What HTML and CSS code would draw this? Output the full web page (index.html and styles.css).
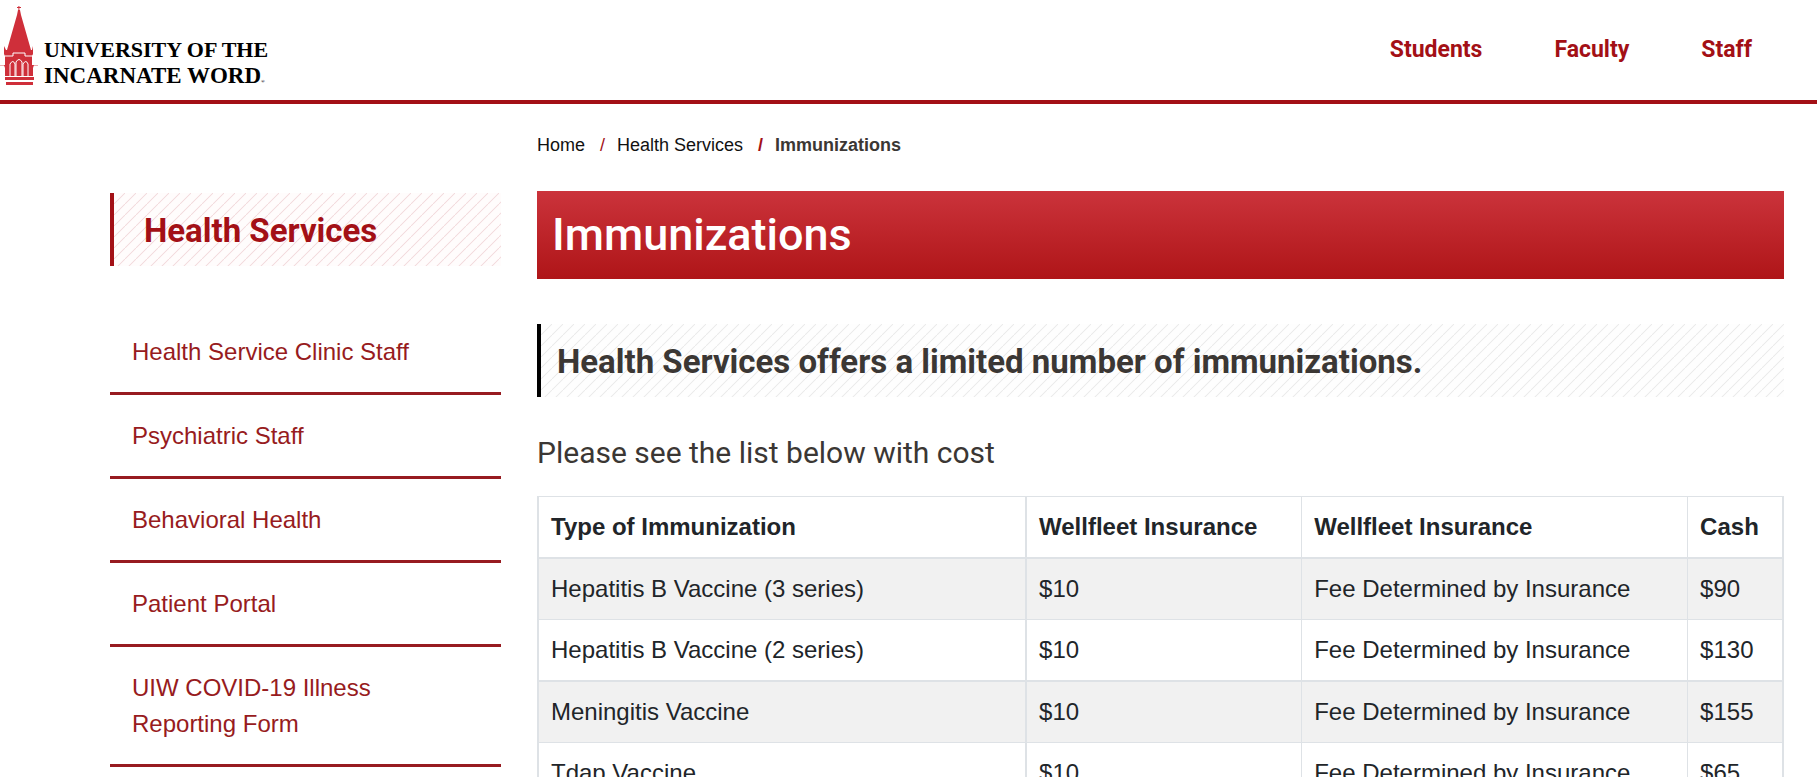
FILE: index.html
```html
<!DOCTYPE html>
<html lang="en">
<head>
  <meta charset="UTF-8">
  <title>Immunizations</title>
  <link rel="stylesheet" href="styles.css">
</head>
<body>
  <header class="header">
    <a class="logo" href="#">
      <svg class="logo-tower" width="38" height="88" viewBox="0 0 38 88" aria-hidden="true">
        <g fill="#cf2f3a">
          <path d="M18.400 6h1v4h-1zM17 7h4v1h-4zM18 10h2l1 5 10 35h1l1-4v8l-1 2v9h2l-1 3v8H5v-8l-1-3h1V56l-1-2v-8l2 4h1L17 15z"/>
          <path d="M5 77h29v3H5zM6 82h27v3H6z"/>
          <path d="M0 65h5v1H0zM33 65h5v1h-5z" opacity=".4"/>
        </g>
        <g fill="none" stroke="#fff">
          <path d="M5 56h8v-3h12v3h8"/>
          <path d="M10 76V64q3-5 5 0v12M16 76V62q3-5 6 0v14M23 76V64q3-5 5 0v12"/>
          <path d="M5 76.500h29M5 81h29"/>
        </g>
      </svg>
      <span class="logo-name">
        <span class="logo-top">UNIVERSITY OF THE</span>
        <span class="logo-bottom">INCARNATE WORD<small class="logo-mark">®</small></span>
      </span>
    </a>
    <nav class="top-nav">
      <a href="#">Students</a>
      <a href="#">Faculty</a>
      <a href="#">Staff</a>
    </nav>
  </header>

  <div class="page">
    <aside class="sidebar">
      <h2 class="sidebar-title">Health Services</h2>
      <ul class="side-nav">
        <li><a href="#">Health Service Clinic Staff</a></li>
        <li><a href="#">Psychiatric Staff</a></li>
        <li><a href="#">Behavioral Health</a></li>
        <li><a href="#">Patient Portal</a></li>
        <li><a href="#">UIW COVID-19 Illness Reporting Form</a></li>
      </ul>
    </aside>

    <main>
      <ol class="breadcrumb">
        <li><a href="#">Home</a></li>
        <li><a href="#">Health Services</a></li>
        <li class="current">Immunizations</li>
      </ol>
      <h1 class="banner">Immunizations</h1>
      <h2 class="notice">Health Services offers a limited number of immunizations.</h2>
      <h3 class="subhead">Please see the list below with cost</h3>
      <table class="prices">
        <thead>
          <tr>
            <th class="col-type">Type of Immunization</th>
            <th class="col-plan">Wellfleet Insurance</th>
            <th class="col-fee">Wellfleet Insurance</th>
            <th>Cash</th>
          </tr>
        </thead>
        <tbody>
          <tr>
            <td>Hepatitis B Vaccine (3 series)</td>
            <td>$10</td>
            <td>Fee Determined by Insurance</td>
            <td>$90</td>
          </tr>
          <tr>
            <td>Hepatitis B Vaccine (2 series)</td>
            <td>$10</td>
            <td>Fee Determined by Insurance</td>
            <td>$130</td>
          </tr>
          <tr>
            <td>Meningitis Vaccine</td>
            <td>$10</td>
            <td>Fee Determined by Insurance</td>
            <td>$155</td>
          </tr>
          <tr>
            <td>Tdap Vaccine</td>
            <td>$10</td>
            <td>Fee Determined by Insurance</td>
            <td>$65</td>
          </tr>
        </tbody>
      </table>
    </main>
  </div>
</body>
</html>
```
FILE: styles.css
```css
* {
  box-sizing: border-box;
}
html {
  height: 100%;
  overflow: hidden;
}
body {
  margin: 0;
  background: #fff;
  color: #212529;
  font-family: "Liberation Sans", Arial, sans-serif;
  font-size: 24px;
  line-height: 36px;
}
a {
  color: inherit;
  text-decoration: none;
}
li a:hover,
.top-nav a:hover {
  text-decoration: underline;
}
h1,
h2,
h3,
ul,
ol {
  margin: 0;
  padding: 0;
}
ul,
ol {
  list-style: none;
}
h1,
h2,
h3,
.top-nav {
  font-family: Roboto, sans-serif;
}

.header {
  display: flex;
  justify-content: space-between;
  align-items: flex-start;
  height: 104px;
  border-bottom: 4px solid #a31016;
}
.logo {
  display: flex;
  gap: 6px;
  color: #000;
  font-family: "Liberation Serif", "Times New Roman", serif;
  font-weight: bold;
  line-height: 26px;
  white-space: nowrap;
}
.logo-name {
  padding-top: 37px;
}
.logo-top,
.logo-bottom {
  display: block;
}
.logo-top {
  font-size: 22px;
}
.logo-bottom {
  font-size: 23px;
}
.logo-mark {
  font-size: 5px;
}
.top-nav {
  display: flex;
  gap: 72px;
  padding: 32px 65px 0 0;
  color: #a31016;
  font-size: 23px;
  font-weight: bold;
}

.page {
  display: grid;
  grid-template-columns: 391fr 1247fr;
  gap: 36px;
  padding: 0 33px 0 110px;
}
.sidebar {
  padding-top: 89px;
}
.sidebar-title,
.notice {
  padding: 19px 16px 17px;
  border-left: 4px solid #000;
  background-size: 11px 11px;
  font-size: 33px;
  line-height: 37px;
}
.sidebar-title {
  padding-left: 30px;
  border-color: #a31016;
  background-color: #fffcfc;
  background-image: linear-gradient(135deg, transparent 45%, #f3dcde 47% 53%, transparent 55%);
  color: #a31016;
}
.side-nav {
  padding-top: 45px;
}
.side-nav li {
  padding: 23px 60px 22px 22px;
  border-bottom: 3px solid #971b20;
  color: #971b20;
}

.breadcrumb {
  display: flex;
  padding: 23px 0 28px;
  font-size: 18px;
  color: #111;
}
.breadcrumb li + li::before {
  content: "/";
  padding: 0 12px 0 15px;
  color: #a31016;
}
.breadcrumb .current {
  color: #3b3734;
  font-weight: bold;
}
.banner {
  padding: 16px 15px;
  background: linear-gradient(#cb333b, #af1518);
  color: #fff;
  font-size: 45px;
  font-weight: 500;
  line-height: 56px;
}
.notice {
  margin-top: 45px;
  background-color: #fefefe;
  background-image: linear-gradient(135deg, transparent 45%, #ebebeb 47% 53%, transparent 55%);
  color: #3b3734;
}
.subhead {
  padding: 38px 0 25px;
  color: #3b3734;
  font-size: 30px;
  font-weight: normal;
}

.prices {
  width: 100%;
  table-layout: fixed;
  border-spacing: 0;
  border-top: 1px solid #dee2e6;
  border-left: 2px solid #dee2e6;
}
.prices th,
.prices td {
  padding: 12px;
  border-right: 1px solid #dee2e6;
  border-bottom: 1px solid #dee2e6;
  text-align: left;
}
.prices th,
.prices tr:nth-child(even) td {
  border-bottom-width: 2px;
}
.prices th:first-child,
.prices td:first-child,
.prices th:last-child,
.prices td:last-child {
  border-right-width: 2px;
}
.prices tbody tr:nth-child(odd) {
  background: #f1f1f1;
}
.col-type {
  width: 39.2%;
}
.col-plan {
  width: 22.1%;
}
.col-fee {
  width: 31%;
}
```
